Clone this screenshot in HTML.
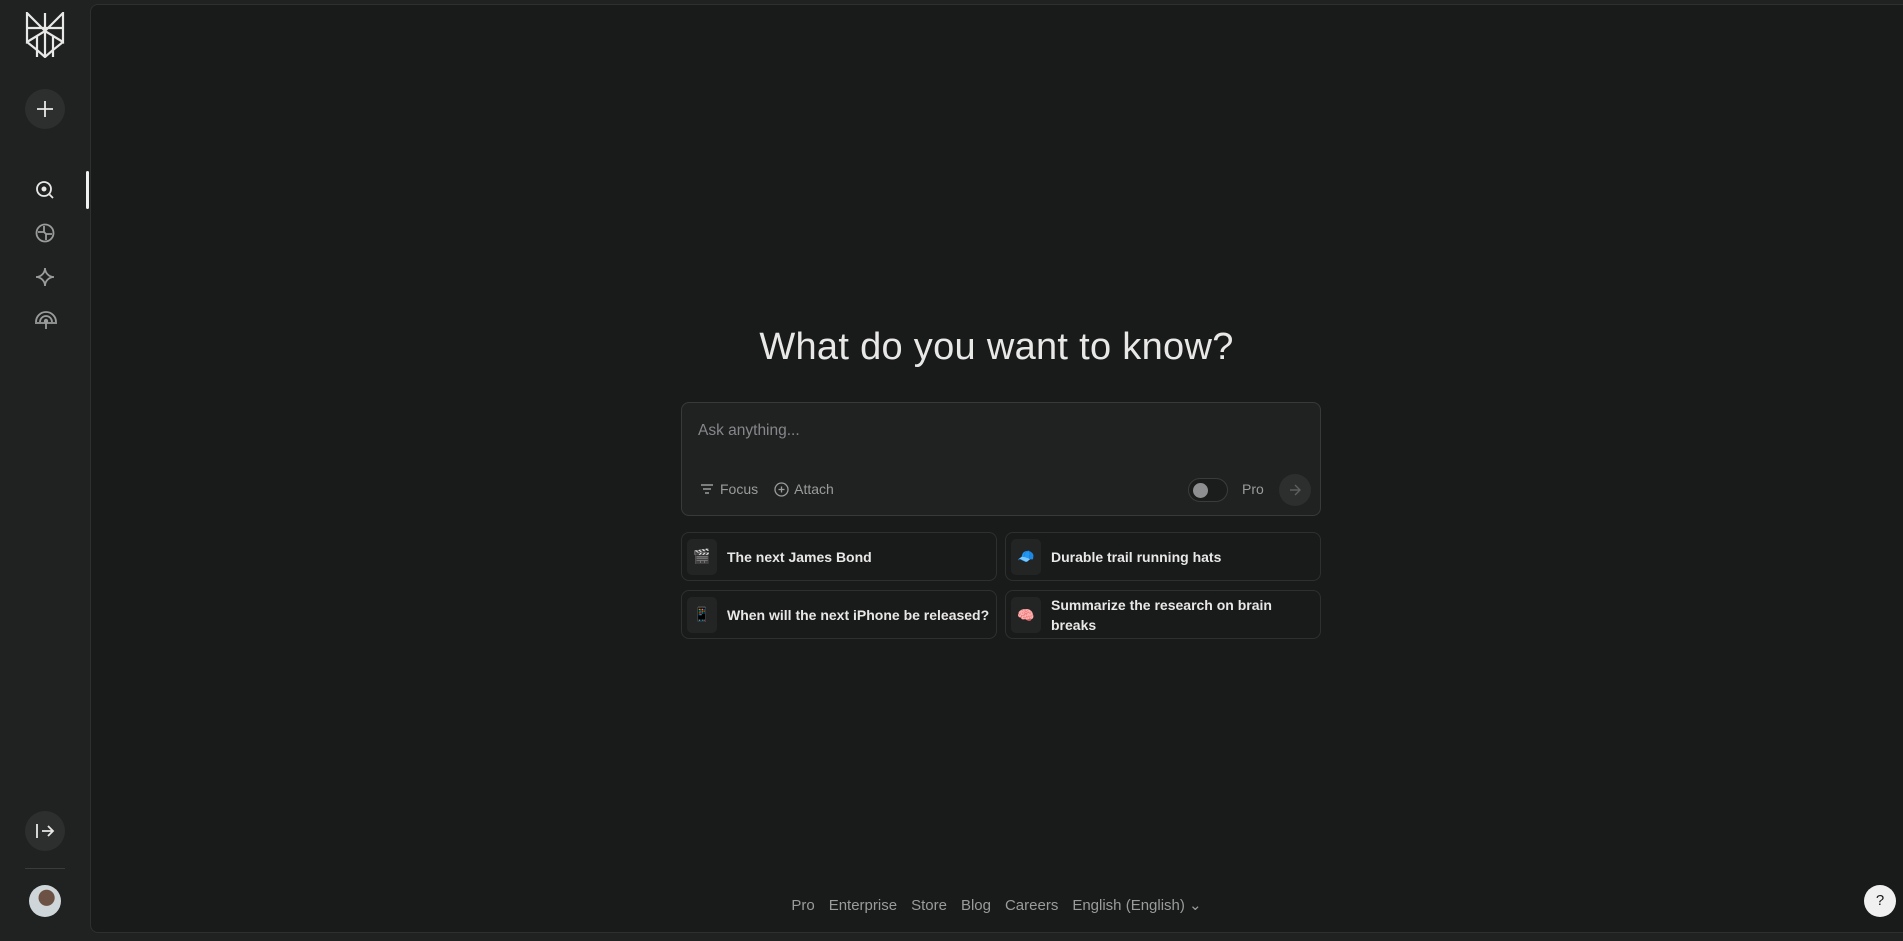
<!DOCTYPE html>
<html><head><style>
*{box-sizing:border-box;margin:0;padding:0}
body{width:1903px;height:941px;background:#202222;font-family:"Liberation Sans",sans-serif;position:relative;overflow:hidden;color:#e8e8e6}
.main{position:absolute;left:90px;top:4px;right:0;bottom:8px;background:#191a1a;border:1px solid #2e3030;border-radius:8px 0 0 8px;border-right:none}
.abs{position:absolute}
.circ{position:absolute;width:40px;height:40px;border-radius:50%;background:#2d2f2f;display:flex;align-items:center;justify-content:center}
h1{position:absolute;left:90px;right:0;top:326px;text-align:center;font-weight:400;font-size:38px;color:#e8e8e6;letter-spacing:0.3px}
.box{position:absolute;left:681px;top:402px;width:640px;height:114px;background:#202222;border:1px solid #383a3a;border-radius:8px}
.card{position:absolute;width:316px;height:49px;border:1px solid #2e3030;border-radius:8px;display:flex;align-items:center;font-size:14px;font-weight:bold;color:#e8e8e6}
.ic{width:30px;height:36px;background:#232525;border-radius:5px;margin:0 10px 0 5px;display:flex;align-items:center;justify-content:center;font-size:14px;flex:none}
.foot{position:absolute;top:896px;left:90px;right:0;text-align:center;font-size:15px;color:#9a9c9c}
.foot span{margin:0 7px}
</style></head><body>
<svg class="abs" style="left:24px;top:12px" width="42" height="46" viewBox="0 0 42 46" fill="none" stroke="#e8e8e6" stroke-width="2.2">
<path d="M21 1V45M3 1L21 19L39 1V16H3V1ZM3 16V30L21 19L39 30V16M3 30L13 38V45M39 30L29 38V45M13 24V38L21 45L29 38V24"/></svg>
<div class="circ" style="left:25px;top:89px"><svg width="18" height="18" stroke="#e8e8e6" stroke-width="1.8"><path d="M9 1V17M1 9H17"/></svg></div>
<svg class="abs" style="left:35px;top:180px" width="22" height="22" fill="none" stroke="#e8e8e6" stroke-width="1.8"><circle cx="9" cy="9" r="7"/><circle cx="9" cy="9" r="1.6" fill="#e8e8e6"/><path d="M14.5 14.5L18 18"/></svg>
<div class="abs" style="left:86px;top:171px;width:3px;height:38px;background:#f0f0f0;border-radius:2px"></div>
<svg class="abs" style="left:35px;top:223px" width="22" height="22" fill="none" stroke="#9a9c9c" stroke-width="1.8"><circle cx="10" cy="10" r="8.5"/><path d="M3 9H9V3M17 11H11V17M9 9L11 11"/></svg>
<svg class="abs" style="left:35px;top:267px" width="22" height="22" fill="none" stroke="#9a9c9c" stroke-width="1.8"><path d="M10 1C10 6 14 10 19 10C14 10 10 14 10 19C10 14 6 10 1 10C6 10 10 6 10 1Z"/></svg>
<svg class="abs" style="left:34px;top:310px" width="24" height="22" fill="none" stroke="#9a9c9c" stroke-width="1.8"><path d="M2 12A10 10 0 0 1 22 12M6 12A6 6 0 0 1 18 12M1 13H23M12 13V19"/><circle cx="12" cy="11" r="1.3" fill="#9a9c9c"/></svg>
<div class="circ" style="left:25px;top:811px"><svg width="20" height="18" fill="none" stroke="#e8e8e6" stroke-width="1.8"><path d="M2 2V16M7 9H18M13 4L18 9L13 14"/></svg></div>
<div class="abs" style="left:25px;top:868px;width:40px;height:1px;background:#3a3c3c"></div>
<div class="abs" style="left:29px;top:885px;width:32px;height:32px;border-radius:50%;background:radial-gradient(circle at 55% 40%,#6b5244 0 30%,#cfd6da 32%)"></div>
<div class="main"></div>
<h1>What do you want to know?</h1>
<div class="box">
<div class="abs" style="left:16px;top:19px;font-size:15.5px;color:#85878a">Ask anything...</div>
<div class="abs" style="left:18px;top:78px;font-size:14px;color:#9a9c9c;display:flex;align-items:center">
<svg width="14" height="12" stroke="#9a9c9c" stroke-width="1.4"><path d="M1 2H13M3 6H11M5 10H9"/></svg><span style="margin:0 16px 0 6px">Focus</span>
<svg width="15" height="15" fill="none" stroke="#9a9c9c" stroke-width="1.3"><circle cx="7.5" cy="7.5" r="6.5"/><path d="M7.5 4.5V10.5M4.5 7.5H10.5"/></svg><span style="margin-left:5px">Attach</span></div>
<div class="abs" style="left:506px;top:75px;width:40px;height:24px;border-radius:12px;border:1px solid #3a3c3c;background:#1b1c1c"><div style="position:absolute;left:4px;top:4px;width:15px;height:15px;border-radius:50%;background:#8e8f90"></div></div>
<div class="abs" style="left:560px;top:78px;font-size:14px;color:#9a9c9c">Pro</div>
<div class="abs" style="left:597px;top:71px;width:32px;height:32px;border-radius:50%;background:#2d2f2f;display:flex;align-items:center;justify-content:center"><svg width="12" height="12" fill="none" stroke="#5d5f5f" stroke-width="1.4"><path d="M1 6H11M6 1L11 6L6 11"/></svg></div>
</div>
<div class="card" style="left:681px;top:532px"><div class="ic">🎬</div>The next James Bond</div>
<div class="card" style="left:1005px;top:532px"><div class="ic">🧢</div>Durable trail running hats</div>
<div class="card" style="left:681px;top:590px"><div class="ic">📱</div>When will the next iPhone be released?</div>
<div class="card" style="left:1005px;top:590px;line-height:20px"><div class="ic">🧠</div>Summarize the research on brain<br>breaks</div>
<div class="foot"><span>Pro</span><span>Enterprise</span><span>Store</span><span>Blog</span><span>Careers</span><span>English (English) ⌄</span></div>
<div class="abs" style="left:1864px;top:885px;width:32px;height:32px;border-radius:50%;background:#f0f0f0;color:#191a1a;font-size:15px;text-align:center;line-height:32px">?</div>
</body></html>
